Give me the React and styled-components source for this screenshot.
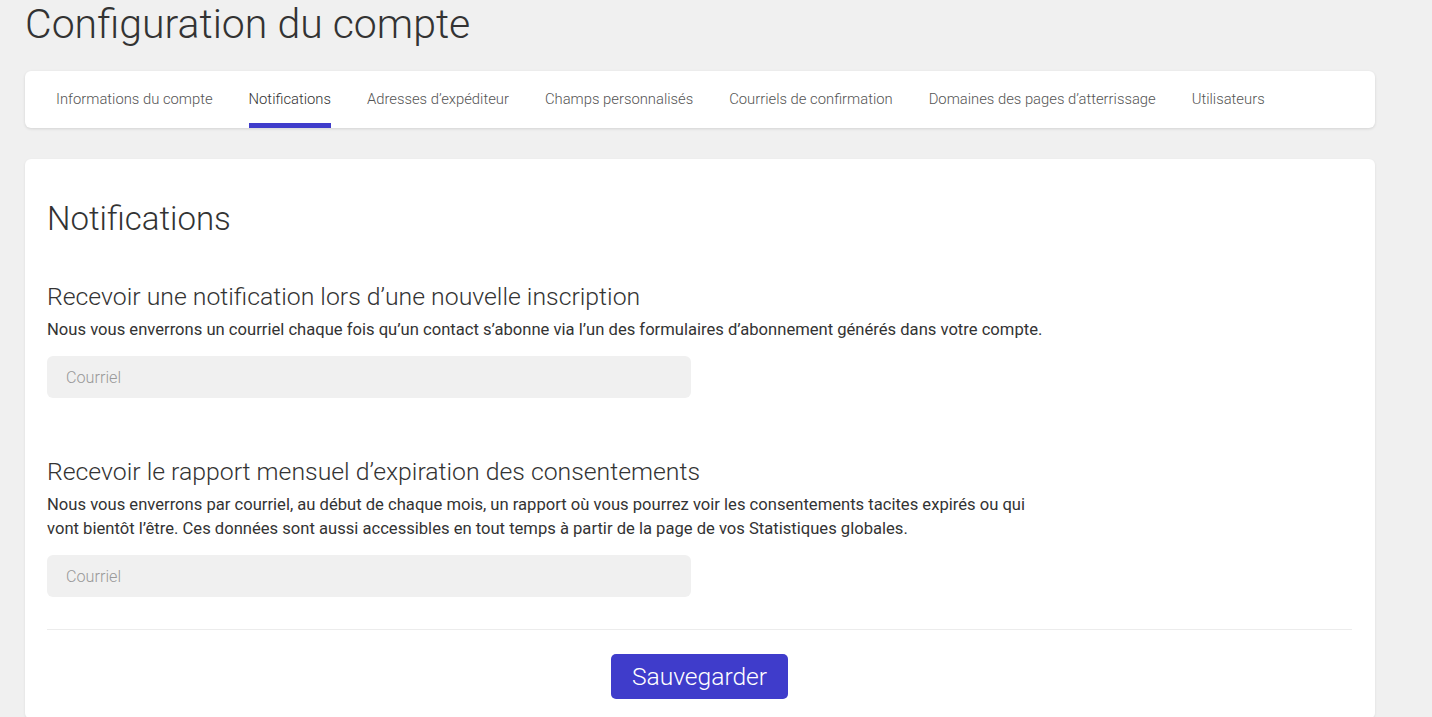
import styled, { createGlobalStyle } from 'styled-components'

const tabs = [
  'Informations du compte',
  'Notifications',
  'Adresses d’expéditeur',
  'Champs personnalisés',
  'Courriels de confirmation',
  'Domaines des pages d’atterrissage',
  'Utilisateurs',
]

const sections = [
  {
    title: 'Recevoir une notification lors d’une nouvelle inscription',
    text: 'Nous vous enverrons un courriel chaque fois qu’un contact s’abonne via l’un des formulaires d’abonnement générés dans votre compte.',
  },
  {
    title: 'Recevoir le rapport mensuel d’expiration des consentements',
    text: 'Nous vous enverrons par courriel, au début de chaque mois, un rapport où vous pourrez voir les consentements tacites expirés ou qui vont bientôt l’être. Ces données sont aussi accessibles en tout temps à partir de la page de vos Statistiques globales.',
  },
]

function App() {
  return (
    <>
      <GlobalStyle />
      <Page>
        <Title>Configuration du compte</Title>
        <TabBar>
          {tabs.map(t => (
            <Tab key={t} active={t === 'Notifications'}>{t}</Tab>
          ))}
        </TabBar>
        <Card>
          <CardTitle>Notifications</CardTitle>
          {sections.map((s, i) => (
            <Section key={i}>
              <SectionTitle>{s.title}</SectionTitle>
              <Description>{s.text}</Description>
              <Input type='email' placeholder='Courriel' />
            </Section>
          ))}
          <Footer>
            <Button>Sauvegarder</Button>
          </Footer>
        </Card>
      </Page>
    </>
  )
}

const GlobalStyle = createGlobalStyle`
  html, body {
    margin: 0;
    background: #f0f0f0;
    font-family: Roboto, "Liberation Sans", Arial, sans-serif;
    color: #333;
    overflow: hidden;
  }
`

const Page = styled.div`
  width: 1350px;
  padding: 0 0 0 25px;
`

const Title = styled.h1`
  margin: 0;
  padding-top: 1px;
  font-size: 41px;
  font-weight: 300;
  line-height: 46px;
  color: #333;
`

const TabBar = styled.nav`
  display: flex;
  gap: 36px;
  height: 57px;
  margin-top: 24px;
  padding: 0 31px;
  background: #fff;
  border-radius: 6px;
  box-shadow: 0 1px 3px rgba(0, 0, 0, 0.12);
`

const Tab = styled.a`
  display: flex;
  align-items: center;
  box-sizing: border-box;
  height: 57px;
  padding-top: 3px;
  font-size: 14.8px;
  font-weight: 300;
  color: ${props => props.active ? '#333' : '#555'};
  border-bottom: 5px solid ${props => props.active ? '#3f3ccb' : 'transparent'};
  cursor: pointer;
`

const Card = styled.div`
  margin-top: 31px;
  padding: 36px 23px 20px 22px;
  background: #fff;
  border-radius: 6px;
  box-shadow: 0 1px 3px rgba(0, 0, 0, 0.08);
`

const CardTitle = styled.h2`
  margin: 0 0 39px;
  font-size: 33px;
  font-weight: 300;
  line-height: 48px;
  color: #333;
`

const Section = styled.section`
  margin-bottom: 59px;
  &:last-of-type { margin-bottom: 32px; }
`

const SectionTitle = styled.h3`
  margin: 0;
  font-size: 24.8px;
  font-weight: 300;
  line-height: 30px;
  color: #333;
`

const Description = styled.p`
  margin: 6px 0 14px;
  max-width: 1010px;
  font-size: 16.6px;
  line-height: 24px;
  color: #333;
`

const Input = styled.input`
  display: block;
  width: 644px;
  height: 42px;
  box-sizing: border-box;
  padding: 0 19px;
  border: none;
  border-radius: 6px;
  background: #f0f0f0;
  font-family: inherit;
  font-size: 16.2px;
  font-weight: 300;
  color: #333;
  outline: none;
  &::placeholder { color: #999; }
`

const Footer = styled.div`
  display: flex;
  justify-content: center;
  padding-top: 24px;
  border-top: 1px solid #ececec;
`

const Button = styled.button`
  width: 177px;
  height: 45px;
  border: none;
  border-radius: 5px;
  background: #3f3ccb;
  color: #fff;
  font-family: inherit;
  font-size: 24.6px;
  font-weight: 300;
  cursor: pointer;
`

export default App
